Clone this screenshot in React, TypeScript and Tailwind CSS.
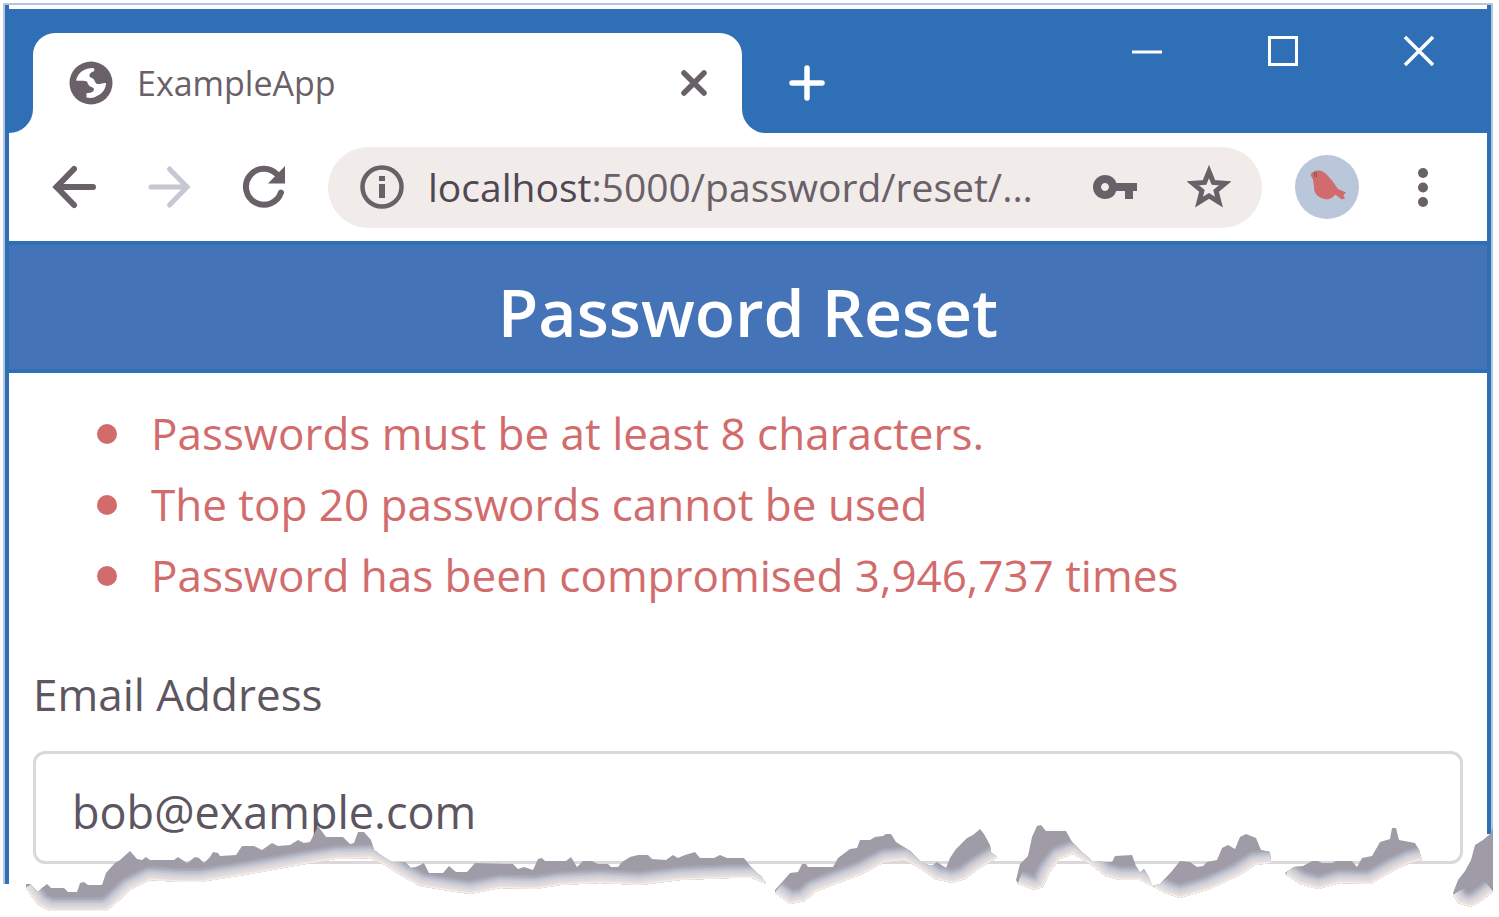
import { useState } from "react";
import { MdVpnKey } from "react-icons/md";

const errors = [
  "Passwords must be at least 8 characters.",
  "The top 20 passwords cannot be used",
  "Password has been compromised 3,946,737 times",
];

type TearPiece = { top: string; bottom: string };

// Each piece has a jagged upper edge (left to right) and a smooth lower edge (right to left).
const tearPieces: TearPiece[] = [
  {
    top: "26,884 30,884 38,892 42,888 47,884 51,888 64,888 68,892 77,892 80,883 84,882 88,885 102,885 106,873 115,863 120,860 130,851 137,859 142,860 146,857 150,860 174,860 178,857 187,863 195,857 199,858 204,863 210,857 213,852 218,853 220,856 236,855 242,846 254,846 262,850 272,843 278,846 290,845 298,840 304,843 310,842 315,832 318,826 326,837 343,837 350,844 354,843 358,832 364,832 371,840 374,850 382,856 392,862 405,862 411,868 416,867 424,863 429,873 443,873 449,866 456,872 467,872 475,863 513,864 518,869 524,867 533,870 538,859 542,858 545,861 566,861 571,857 577,867 583,861 592,861 598,864 608,864 611,867 618,867 622,862 630,857 638,855 648,855 652,859 666,860 673,855 678,858 685,855 695,852 700,858 714,858 720,855 727,858 744,858 751,867 757,873 762,877 766,884",
    bottom:
      "766,884 752,878 730,878 680,880 640,885 600,883 560,885 535,889 500,888 480,892 470,894 450,891 420,886 400,875 385,865 370,858 335,859 300,865 250,874 200,882 180,882 150,880 130,890 112,907 105,911 50,911 38,905 26,888",
  },
  {
    top: "775,890 784,880 790,873 798,872 802,864 806,864 808,867 833,867 838,858 850,849 857,848 860,840 870,840 875,837 883,836 886,834 891,834 896,842 910,851 922,863 932,866 937,862 946,868 950,858 956,849 967,838 973,835 980,829 984,834 990,845 991,852 997,857",
    bottom:
      "997,858 980,868 965,879 952,883 935,879 918,867 905,860 885,862 860,875 830,886 815,892 805,901 790,904 775,893",
  },
  {
    top: "1016,880 1020,864 1028,856 1032,837 1037,826 1041,825 1046,831 1066,831 1072,842 1080,850 1092,861 1102,862 1112,862 1115,856 1132,855 1136,866 1140,873 1144,869 1148,876 1152,885",
    bottom:
      "1152,886 1140,880 1120,880 1105,876 1090,864 1073,854 1060,859 1050,872 1043,887 1035,890 1018,884",
  },
  {
    top: "1152,886 1160,884 1172,871 1180,861 1190,862 1197,867 1203,866 1207,862 1217,860 1222,848 1228,845 1235,849 1240,837 1246,834 1256,838 1261,850 1270,852 1271,862",
    bottom: "1271,863 1255,865 1240,875 1210,889 1180,898 1165,893 1154,887",
  },
  {
    top: "1285,873 1294,867 1303,866 1312,861 1318,861 1322,863 1332,863 1336,861 1352,861 1357,867 1362,858 1372,856 1380,842 1390,839 1392,828 1396,828 1399,840 1415,843 1419,850 1421,857",
    bottom: "1422,860 1410,863 1395,870 1370,884 1340,883 1318,889 1300,884 1286,875",
  },
  {
    top: "1453,893 1458,880 1465,871 1471,860 1475,845 1483,840 1490,834 1493,828",
    bottom: "1493,892 1480,902 1470,907 1458,903 1453,895",
  },
];

const fadeLayers = [
  { width: 28, color: "#a5a3b0" },
  { width: 25, color: "#adadba" },
  { width: 22, color: "#b7b9c6" },
  { width: 19, color: "#c1c4d1" },
  { width: 16, color: "#cccdd7" },
  { width: 13, color: "#d6d3d9" },
  { width: 10, color: "#ded8da" },
  { width: 7, color: "#e6dedd" },
  { width: 3, color: "#f3edec" },
];

function TornEdge() {
  return (
    <svg
      className="pointer-events-none absolute inset-x-0 bottom-0 h-[97px] w-full"
      viewBox="0 820 1499 97"
      preserveAspectRatio="none"
      aria-hidden="true"
    >
      <rect x="1486" y="834" width="13" height="83" fill="#fff" />
      {tearPieces.map((piece, i) => (
        <g key={i}>
          <clipPath id={`tear-${i}`}>
            <polygon points={`${piece.top} ${piece.bottom}`} />
          </clipPath>
          <g clipPath={`url(#tear-${i})`}>
            <rect x="0" y="820" width="1499" height="97" fill="#9f9ca8" />
            {fadeLayers.map((layer) => (
              <polyline
                key={layer.width}
                points={piece.bottom}
                fill="none"
                stroke={layer.color}
                strokeWidth={layer.width}
                strokeLinejoin="round"
              />
            ))}
          </g>
        </g>
      ))}
    </svg>
  );
}

function GlobeIcon() {
  return (
    <svg className="size-11 shrink-0" viewBox="0 0 44 44" aria-hidden="true">
      <circle cx="22" cy="22" r="21.500" fill="#6a6068" />
      <path
        d="M24 7C16 7 9 11 7 19.500c4 .5 8-.5 11 1 1 3 2 4.500 4.500 5.500 3 1 3 2.500 1.500 4.500-1.500 1.500-4 1.500-6.500 1.500v4.500c4 1 7.500.5 10.500-1.500 5-2 9-7 9-13-3-.5-5.500 1.500-8.500 1-2.500-.5-2.500-4-4.500-5.500-1.500-1-4-1-3.500-3.500.5-2 2-3 4-3.500 1.500-1 1-3-.5-3.500z"
        fill="#fff"
      />
    </svg>
  );
}

function ArrowIcon({ direction }: { direction: "left" | "right" }) {
  return (
    <svg className="size-16" viewBox="0 0 64 64" aria-hidden="true">
      <path
        d={direction === "left" ? "M51 32H14.500M32 14L14.500 32 32 50" : "M14 32h36M32.500 14L50 32 32.500 50"}
        fill="none"
        stroke="currentColor"
        strokeWidth={direction === "left" ? 6 : 5}
        strokeLinecap="round"
      />
    </svg>
  );
}

function ReloadIcon() {
  return (
    <svg className="size-16" viewBox="0 0 64 64" aria-hidden="true">
      <path
        d="M49 37.500A18 18 0 1 1 45 19.300"
        fill="none"
        stroke="currentColor"
        strokeWidth="6"
        strokeLinecap="round"
      />
      <path d="M53 11v17.500H36z" fill="currentColor" />
    </svg>
  );
}

function InfoIcon() {
  return (
    <svg className="size-[52px] shrink-0" viewBox="0 0 52 52" fill="currentColor" aria-hidden="true">
      <circle cx="26" cy="26" r="19.500" fill="none" stroke="currentColor" strokeWidth="4.500" />
      <rect x="23" y="15" width="6" height="5" />
      <rect x="23" y="23" width="6" height="14" />
    </svg>
  );
}

function StarIcon() {
  return (
    <svg className="size-11" viewBox="0 0 44 44" aria-hidden="true">
      <path
        d="M22 6.500l4.400 10.900 11.700.9-9 7.500 2.900 11.400-10-6.200-10 6.200 2.900-11.400-9-7.500 11.700-.9z"
        fill="none"
        stroke="currentColor"
        strokeWidth="5"
      />
    </svg>
  );
}

function BirdAvatar() {
  return (
    <svg className="size-16" viewBox="0 0 64 64" aria-hidden="true">
      <circle cx="32" cy="32" r="32" fill="#bac6d9" />
      <path
        d="M15.500 20c1.500-3.500 5-5 8.500-4.500 5 .5 9 5 13 10l6 8.500 8 3.500-2.500 2.500 1.500 3.500-3.500 1-6-5c-3 4-7 5.500-11 4.500-7-1.500-11-6-10.500-13l-1-6.500z"
        fill="#d26c6c"
      />
      <path d="M19.500 22v-4h2v4" fill="none" stroke="#6a6068" />
    </svg>
  );
}

function TitleBar() {
  return (
    <div className="flex h-31 items-end bg-[#2f6fb5]">
      <div className="relative ml-6 flex h-25 w-[709px] items-center rounded-t-[22px] bg-white pr-[30px] pl-9">
        <span className="absolute bottom-0 -left-6 size-6 overflow-hidden bg-white">
          <span className="block size-full rounded-br-[24px] bg-[#2f6fb5]" />
        </span>
        <span className="absolute -right-6 bottom-0 size-6 overflow-hidden bg-white">
          <span className="block size-full rounded-bl-[24px] bg-[#2f6fb5]" />
        </span>
        <GlobeIcon />
        <span className="ml-6 flex-1 text-[34px] leading-[48px] text-[#6a6068]">ExampleApp</span>
        <button type="button" aria-label="Close tab" className="p-1">
          <svg className="size-7" viewBox="0 0 28 28" aria-hidden="true">
            <path d="M4 4l20 20M24 4L4 24" stroke="#6a6068" strokeWidth="5.500" strokeLinecap="round" />
          </svg>
        </button>
      </div>
      <button type="button" aria-label="New tab" className="mb-8 ml-[47px]">
        <svg className="size-9" viewBox="0 0 36 36" aria-hidden="true">
          <path d="M18 3v30M3 18h30" stroke="#fff" strokeWidth="5.500" strokeLinecap="round" />
        </svg>
      </button>
      <div className="mr-[52px] mb-[66px] ml-auto flex gap-[104px]">
        <button type="button" aria-label="Minimize">
          <svg className="size-8" viewBox="0 0 32 32" aria-hidden="true">
            <path d="M1 17h30" stroke="#fff" strokeWidth="3" />
          </svg>
        </button>
        <button type="button" aria-label="Maximize">
          <svg className="size-8" viewBox="0 0 32 32" aria-hidden="true">
            <rect x="2.500" y="2.500" width="27" height="27" fill="none" stroke="#fff" strokeWidth="3" />
          </svg>
        </button>
        <button type="button" aria-label="Close">
          <svg className="size-8" viewBox="0 0 32 32" aria-hidden="true">
            <path d="M2 2l28 28M30 2L2 30" stroke="#fff" strokeWidth="3.500" />
          </svg>
        </button>
      </div>
    </div>
  );
}

function Toolbar() {
  return (
    <div className="flex h-27 items-center bg-white pr-12 pl-[33px] text-[#6a6068]">
      <div className="flex gap-[31px]">
        <button type="button" aria-label="Back">
          <ArrowIcon direction="left" />
        </button>
        <button type="button" aria-label="Forward" className="text-[#c5c8d2]">
          <ArrowIcon direction="right" />
        </button>
        <button type="button" aria-label="Reload">
          <ReloadIcon />
        </button>
      </div>
      <div className="ml-8 flex h-[81px] min-w-0 flex-1 items-center rounded-full bg-[#f1ebea] pr-[31px] pl-7">
        <InfoIcon />
        <span className="ml-5 min-w-0 flex-1 truncate text-[39px] leading-[54px]">
          <span className="text-[#4f4752]">localhost</span>:5000/password/reset/...
        </span>
        <button type="button" aria-label="Saved passwords" className="ml-4">
          <MdVpnKey className="size-12" />
        </button>
        <button type="button" aria-label="Bookmark" className="ml-12">
          <StarIcon />
        </button>
      </div>
      <button type="button" aria-label="Profile" className="ml-[33px]">
        <BirdAvatar />
      </button>
      <button type="button" aria-label="Menu" className="ml-12">
        <svg className="h-11 w-8" viewBox="0 0 32 44" fill="currentColor" aria-hidden="true">
          <circle cx="16" cy="8" r="5" />
          <circle cx="16" cy="22.500" r="5" />
          <circle cx="16" cy="37" r="5" />
        </svg>
      </button>
    </div>
  );
}

export default function App() {
  const [email, setEmail] = useState("bob@example.com");

  return (
    <div className="relative bg-white px-[3px] pt-[3px] pb-[33px] font-['Open_Sans','Noto_Sans',sans-serif]">
      <div className="mr-[3px] border-x-2 border-t-2 border-[#b5c5dc]">
        <div className="border-x-4 border-[#2f6fb5] pt-1">
          <TitleBar />
          <Toolbar />
          <header className="border-y-4 border-[#2f6fb5] bg-[#4573b7] text-center">
            <h1 className="pt-4 pb-2 text-[66px] leading-[100px] font-semibold text-white">Password Reset</h1>
          </header>
          <main className="px-6 pt-[25px] pb-5">
            <ul className="pl-16 text-[44px] leading-[71px] text-[#d26c6c]">
              {errors.map((error) => (
                <li key={error} className="flex items-center gap-[34px]">
                  <span className="size-5 shrink-0 rounded-full bg-[#d26c6c]" />
                  {error}
                </li>
              ))}
            </ul>
            <form className="mt-[55px]">
              <label htmlFor="email" className="block text-[44px] leading-[56px] text-[#5d5560]">
                Email Address
              </label>
              <input
                id="email"
                type="email"
                value={email}
                onChange={(event) => setEmail(event.target.value)}
                className="mt-[29px] block h-[113px] w-full rounded-xl border-3 border-[#dcd8da] bg-white px-9 pt-2 text-[45px] text-[#5d5560] outline-none"
              />
            </form>
          </main>
        </div>
      </div>
      <TornEdge />
    </div>
  );
}
